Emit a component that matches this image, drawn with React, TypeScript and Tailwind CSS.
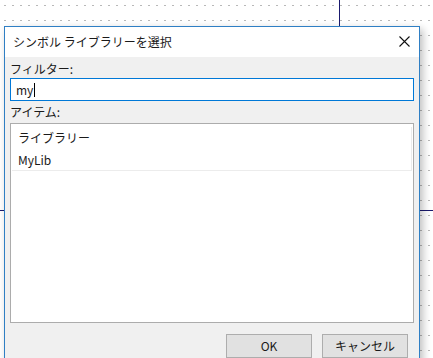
import React from "react";

export default function App() {
  const font = { fontFamily: '"Noto Sans CJK JP", "Noto Sans", sans-serif' };
  return (
    <div
      className="relative w-[433px] h-[358px] overflow-hidden bg-white bg-[radial-gradient(circle,#b8b8b8_0.6px,transparent_0.9px)] bg-[length:8px_15px] bg-[position:1px_-2px]"
      style={font}
    >
      <div className="absolute left-[339px] top-0 w-px h-[27px] bg-[#1a1a6e]" />
      <div className="absolute left-0 top-[210px] w-[433px] h-px bg-[#1a1a6e]" />
      <div className="absolute left-[4px] top-[26px] w-[416px] h-[340px] border border-[#2f7fc4] bg-[#f0f0f0] shadow-[3px_3px_8px_rgba(0,0,0,0.25)] flex flex-col">
        <div className="h-[30px] bg-white flex items-center justify-between pl-[8px] pr-[9px] shrink-0">
          <span className="text-[12px] leading-none text-[#1a1a1a] mt-[-1px]">シンボル ライブラリーを選択</span>
          <svg width="11" height="11" viewBox="0 0 11 11" className="mt-[-1px]">
            <path d="M0.5 0.5L10.5 10.5M10.5 0.5L0.5 10.5" stroke="#111" strokeWidth="1.1" />
          </svg>
        </div>
        <div className="flex flex-col px-[5px] pt-[3px]">
          <div className="text-[12px] leading-[18px] h-[18px] text-[#1a1a1a]">フィルター:</div>
          <div className="h-[23px] border border-[#0078d7] bg-white flex items-center pl-[5px] text-[12px] text-[#1a1a1a] mt-[0px]">
            <span className="leading-none">my</span>
            <span className="w-px h-[14px] bg-black ml-[1px]" />
          </div>
          <div className="text-[12px] leading-[18px] h-[18px] mt-[2px] text-[#1a1a1a]">アイテム:</div>
          <div className="h-[200px] border border-[#acacac] bg-white mt-[2px] p-[1px]">
            <div className="border border-[#ececec] border-t-0 border-l-0">
              <div className="h-[22px] flex items-center pl-[6px] text-[12px] text-[#1a1a1a] mt-[2px]">ライブラリー</div>
              <div className="h-[21px] flex items-center pl-[6px] text-[12px] text-[#1a1a1a]">MyLib</div>
            </div>
          </div>
          <div className="flex justify-end gap-[10px] mt-[11px] pr-[6px]">
            <button className="w-[86px] h-[24px] border border-[#adadad] bg-[#e1e1e1] text-[12px] text-[#1a1a1a] flex items-center justify-center">OK</button>
            <button className="w-[86px] h-[24px] border border-[#adadad] bg-[#e1e1e1] text-[12px] text-[#1a1a1a] flex items-center justify-center">キャンセル</button>
          </div>
        </div>
      </div>
    </div>
  );
}
